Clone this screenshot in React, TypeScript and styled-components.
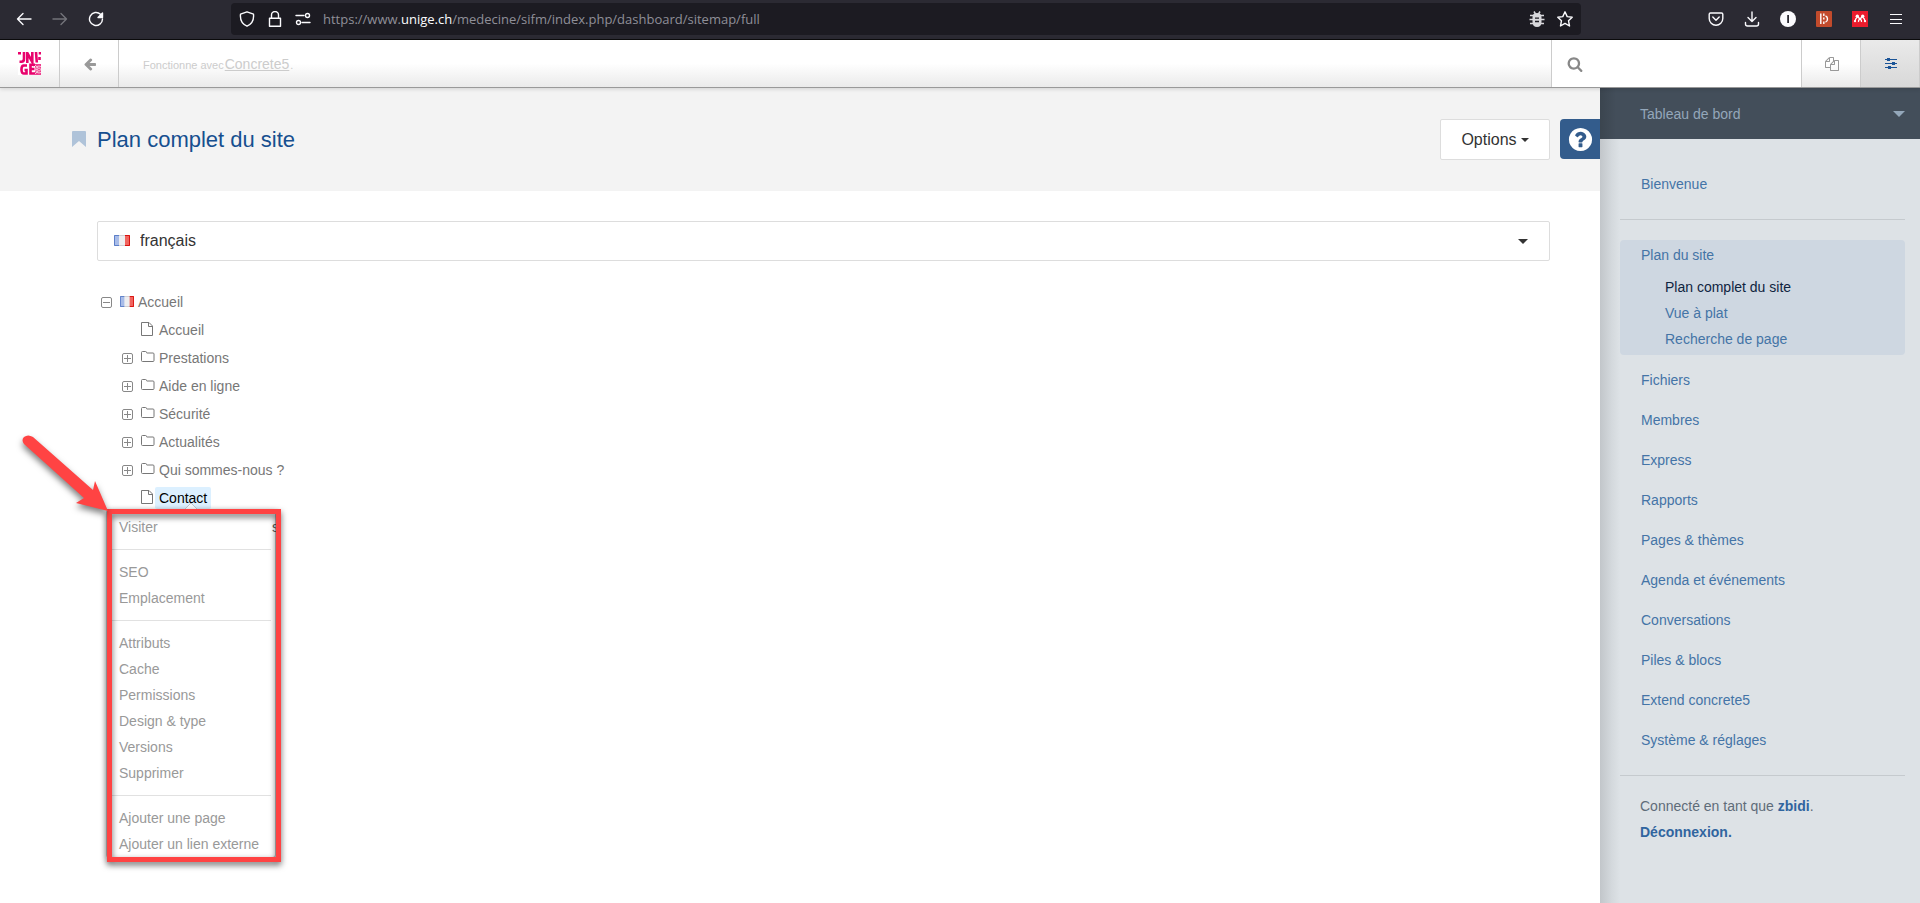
import React from "react";
import styled, { createGlobalStyle, css } from "styled-components";

const GlobalStyle = createGlobalStyle`
  * { box-sizing: border-box; }
  body {
    margin: 0;
    background: #fff;
    font-family: "Liberation Sans", Arial, sans-serif;
    font-size: 14px;
    line-height: 20px;
  }
  a { text-decoration: none; color: inherit; }
  svg { display: block; flex: none; }
  button { font: inherit; color: inherit; border: 0; background: none; padding: 0; }
`;

const Page = styled.div`
  min-height: 100vh;
  display: flex;
  flex-direction: column;
`;

/* Browser bar */

const BrowserBar = styled.div`
  display: flex;
  align-items: center;
  height: 40px;
  padding-bottom: 1px;
  background: #2b2a33;
  border-bottom: 1px solid #0c0c0d;
  color: #fbfbfe;
`;

const NavButtons = styled.div`
  display: flex;
  align-items: center;
  gap: 20px;
  width: 231px;
  padding-left: 16px;
`;

const IconButton = styled.button<{ $dim?: boolean }>`
  display: flex;
  color: ${(p) => (p.$dim ? "#73737a" : "inherit")};
`;

const AddressField = styled.div`
  flex: 1;
  display: flex;
  align-items: center;
  gap: 12px;
  height: 32px;
  padding: 0 8px;
  background: #1c1b22;
  border-radius: 4px;
`;

const Url = styled.div`
  flex: 1;
  font-family: "Open Sans", "Noto Sans", sans-serif;
  font-size: 13px;
  color: #8f8f98;
  strong { font-weight: 400; color: #fbfbfe; }
`;

const Extensions = styled.div`
  display: flex;
  align-items: center;
  justify-content: flex-end;
  gap: 20px;
  width: 339px;
  padding-right: 16px;
`;

/* CMS toolbar */

const Toolbar = styled.header`
  position: relative;
  z-index: 2;
  display: flex;
  height: 48px;
  background: linear-gradient(to bottom, #fff 50%, #eaeaea);
  border-bottom: 1px solid #999;
  box-shadow: 0 1px 4px rgba(0, 0, 0, 0.15);
`;

const ToolCell = styled.a<{ $active?: boolean }>`
  display: flex;
  align-items: center;
  justify-content: center;
  width: 59px;
  padding-left: 2px;
  border-right: 1px solid #ccc;
  color: #999;
  ${(p) =>
    p.$active &&
    css`
      background: linear-gradient(to bottom, #eaeaea, #d8d8d8);
      color: #1b5497;
    `}
`;

const LogoCell = styled(ToolCell)`
  width: 60px;
  padding-left: 0;
`;

const Powered = styled.div`
  flex: 1;
  display: flex;
  align-items: baseline;
  gap: 1px;
  padding: 14px 24px 0;
  font-size: 11px;
  color: #ccc;
  a { font-size: 14px; text-decoration: underline; }
`;

const SearchBox = styled.label`
  display: flex;
  align-items: center;
  gap: 12px;
  width: 251px;
  padding: 0 15px;
  background: #fff;
  border: solid #ccc;
  border-width: 0 1px;
  color: #888;
  input {
    flex: 1;
    min-width: 0;
    border: 0;
    outline: 0;
    background: none;
    font: inherit;
  }
`;

/* Page body */

const Body = styled.div`
  flex: 1;
  display: flex;
`;

const Main = styled.main`
  flex: 1;
  min-width: 0;
`;

const PageHeader = styled.div`
  display: flex;
  align-items: flex-start;
  padding: 31px 0 31px 72px;
  background: #f3f3f3;
`;

const Bookmark = styled.svg`
  margin-top: 12px;
`;

const Title = styled.h1`
  flex: 1;
  margin: 0 0 0 11px;
  font-size: 22px;
  line-height: 41px;
  font-weight: 400;
  color: #164f8f;
`;

const OptionsButton = styled.button`
  display: flex;
  align-items: center;
  justify-content: center;
  gap: 4px;
  width: 110px;
  height: 41px;
  margin-right: 10px;
  border: 1px solid #ddd;
  border-radius: 2px;
  background: #fff;
  font-size: 16px;
  color: #333;
`;

const HelpButton = styled.button`
  display: flex;
  align-items: center;
  justify-content: center;
  width: 40px;
  height: 40px;
  border-radius: 4px 0 0 4px;
  background: #335c8c;
  color: #fff;
`;

const Content = styled.div`
  padding: 30px 50px 24px 97px;
`;

const LanguagePicker = styled.label`
  display: flex;
  align-items: center;
  gap: 10px;
  height: 40px;
  padding: 0 21px 0 16px;
  border: 1px solid #ddd;
  border-radius: 2px;
  color: #333;
  select {
    flex: 1;
    appearance: none;
    border: 0;
    outline: 0;
    padding: 0;
    background: none;
    font: inherit;
    font-size: 16px;
    color: inherit;
  }
`;

/* Site tree */

const Tree = styled.ul`
  margin: 27px 0 0;
  padding: 0;
  list-style: none;
  ul { margin: 0; padding: 0 0 0 21px; list-style: none; }
`;

const Row = styled.div`
  position: relative;
  display: flex;
  align-items: center;
  height: 28px;
  padding-left: 4px;
  color: #777;
`;

const Toggle = styled.button`
  width: 11px;
  height: 12px;
  margin-right: 8px;
  color: #888;
`;

const ToggleSpace = styled.span`
  width: 11px;
  margin-right: 8px;
`;

const NodeLink = styled.a<{ $selected?: boolean }>`
  padding: 1px 4px;
  border-radius: 2px;
  background: ${(p) => (p.$selected ? "#dcf0ff" : "none")};
  color: ${(p) => (p.$selected ? "#000" : "inherit")};
`;

/* Context menu, opened below the selected page */

const MenuLayer = styled.div`
  position: absolute;
  z-index: 3;
  top: 25px;
  left: -12px;
  width: 170px;
`;

const Menu = styled.ul`
  && {
    padding: 4px 4px 0 5px;
    border: 1px solid #bbb;
    border-radius: 3px;
    background: #fff;
    box-shadow: 0 2px 6px rgba(0, 0, 0, 0.2);
    color: #999;
  }
`;

const MenuItem = styled.li`
  display: flex;
  justify-content: space-between;
  padding-left: 7px;
  line-height: 26px;
  white-space: nowrap;
  span { margin-right: -8px; color: #555; }
`;

const MenuDivider = styled.li`
  height: 1px;
  margin: 9px 0;
  background: #e1e1e1;
`;

const Notch = styled.svg`
  position: absolute;
  top: -7px;
  left: 76px;
`;

const Frame = styled.div`
  position: absolute;
  inset: 0 -5px -4px 1px;
  border: 5px solid #ff4343;
  filter: drop-shadow(0 3px 3px rgba(0, 0, 0, 0.6));
  pointer-events: none;
`;

const Pointer = styled.svg`
  position: absolute;
  top: -79px;
  left: -90px;
  overflow: visible;
  filter: drop-shadow(0 4px 3px rgba(0, 0, 0, 0.5));
  pointer-events: none;
`;

/* Dashboard panel */

const Panel = styled.aside`
  width: 320px;
  background: linear-gradient(to right, #c2c6ca, #d4d9dd 12px, #dde2e6 20px);
`;

const PanelHeader = styled.button`
  display: flex;
  align-items: center;
  justify-content: space-between;
  width: 100%;
  height: 51px;
  padding: 0 15px 0 40px;
  background: linear-gradient(to right, #3b454f, #434e5a 16px);
  color: #94a7ba;
`;

const PanelNav = styled.nav`
  padding: 25px 15px 0 20px;
  color: #4474a6;
`;

const PanelLink = styled.a`
  display: block;
  padding: 10px 0 10px 21px;
`;

const PanelGroup = styled.div`
  margin-bottom: 5px;
  padding-bottom: 3px;
  border-radius: 4px;
  background: #ced7e1;
`;

const GroupTitle = styled.a`
  display: block;
  padding: 5px 21px;
  margin-bottom: 4px;
`;

const SubLink = styled.a<{ $current?: boolean }>`
  display: block;
  padding-left: 45px;
  line-height: 26px;
  color: ${(p) => (p.$current ? "#0f2440" : "inherit")};
`;

const Divider = styled.hr`
  height: 1px;
  margin: 15px 0 20px;
  border: 0;
  background: #c5cace;
`;

const Account = styled.p`
  margin: -3px 0 0;
  padding-left: 20px;
  line-height: 26px;
  color: #5f6c79;
  a { font-weight: 700; color: #30659f; }
`;

/* Icons */

const Caret = ({ w, h }: { w: number; h: number }) => (
  <svg width={w} height={h} viewBox="0 0 10 5" preserveAspectRatio="none" fill="currentColor">
    <path d="M0 0h10L5 5z" />
  </svg>
);

const Fa = ({ d, size }: { d: string; size: number }) => (
  <svg width={size} height={size} viewBox="0 0 1792 1792" fill="currentColor">
    <path d={d} />
  </svg>
);

const ARROW_LEFT =
  "M1664 896v128q0 53-32.5 90.5t-84.5 37.5h-704l293 294q38 36 38 90t-38 90l-75 76q-37 37-90 37-52 0-91-37l-651-652q-37-37-37-90 0-52 37-91l651-650q38-38 91-38 52 0 90 38l75 74q38 38 38 91t-38 91l-293 293h704q52 0 84.5 37.5t32.5 90.5z";
const SEARCH =
  "M1216 832q0-185-131.5-316.5t-316.5-131.5-316.5 131.5-131.5 316.5 131.5 316.5 316.5 131.5 316.5-131.5 131.5-316.5zm512 832q0 52-38 90t-90 38q-54 0-90-38l-343-342q-179 124-399 124-143 0-273.5-55.5t-225-150-150-225-55.5-273.5 55.5-273.5 150-225 225-150 273.5-55.5 273.5 55.5 225 150 150 225 55.5 273.5q0 220-124 399l343 343q37 37 37 90z";
const FILES =
  "M1696 384q40 0 68 28t28 68v1216q0 40-28 68t-68 28h-960q-40 0-68-28t-28-68v-288h-544q-40 0-68-28t-28-68v-672q0-40 20-88t48-76l408-408q28-28 76-48t88-20h416q40 0 68 28t28 68v328q68-40 128-40h416zm-544 213l-299 299h299v-299zm-640-384l-299 299h299v-299zm196 647l316-316v-416h-384v416q0 40-28 68t-68 28h-416v640h512v-256q0-40 20-88t48-76zm956 804v-1152h-384v416q0 40-28 68t-68 28h-416v640h896z";
const QUESTION =
  "M1024 1376v-192q0-14-9-23t-23-9h-192q-14 0-23 9t-9 23v192q0 14 9 23t23 9h192q14 0 23-9t9-23zm256-672q0-88-55.5-163t-138.5-116-170-41q-243 0-371 213-15 24 8 42l132 100q7 6 19 6 16 0 25-12 53-68 86-92 34-24 86-24 48 0 85.5 26t37.5 59q0 38-20 61t-68 45q-63 28-115.5 86.5t-52.5 125.5v36q0 14 9 23t23 9h192q14 0 23-9t9-23q0-19 21.5-49.5t54.5-49.5q32-18 49-28.5t46-35 44.5-48 28-60.5 12.5-81zm384 192q0 209-103 385.5t-279.5 279.5-385.5 103-385.5-103-279.5-279.5-103-385.5 103-385.5 279.5-279.5 385.5-103 385.5 103 279.5 279.5 103 385.5z";

const Line = ({ children, size = 16 }: { children: React.ReactNode; size?: number }) => (
  <svg
    width={size}
    height={size}
    viewBox="0 0 16 16"
    fill="none"
    stroke="currentColor"
    strokeWidth="1.4"
    strokeLinecap="round"
    strokeLinejoin="round"
  >
    {children}
  </svg>
);

const Flag = ({ w }: { w: number }) => (
  <svg width={w} height="12" viewBox="0 0 16 12" preserveAspectRatio="none">
    <rect width="16" height="11" fill="#eeeef0" />
    <rect width="5" height="11" fill="#a8bce8" />
    <rect x="11" width="5" height="11" fill="#f0655f" />
    <path d="M5.500.5H.5v10h5" fill="none" stroke="#5d7fc8" />
    <path d="M10.500.5h5v10h-5" fill="none" stroke="#d9120f" />
    <path d="M5 .5h6M5 10.500h6" stroke="#cfcfd2" />
  </svg>
);

const ToggleIcon = ({ open }: { open?: boolean }) => (
  <svg width="11" height="11" viewBox="0 0 11 11" fill="none" stroke="currentColor">
    <rect x=".5" y=".5" width="10" height="10" rx="1.500" />
    <path d={open ? "M2 5.500h7" : "M2 5.500h7M5.500 2v7"} />
  </svg>
);

const FileIcon = () => (
  <svg width="14" height="16" viewBox="0 0 14 16" fill="none" stroke="#777">
    <path d="M.5.5h7.500l3.500 3.500v9.500H.5zM7.500.5v4h4" />
  </svg>
);

const FolderIcon = () => (
  <svg width="14" height="14" viewBox="0 0 14 14" fill="none" stroke="#777">
    <path d="M1.500.5h3q1 0 1 1 0 .5.5.5h6q1 0 1 1v6.500q0 1-1 1H1.500q-1 0-1-1v-8q0-1 1-1z" />
  </svg>
);

const Logo = () => (
  <svg width="23" height="23" viewBox="0 0 23 23">
    <rect width="23" height="23" fill="#fff" />
    <g fill="none" stroke="#e8026c" strokeWidth="2.600">
      <path d="M0 1.300h3M1.500 9.800h2q2.500 0 2.500-3V0" />
      <path d="M9.300 11V1l5 9V0M18 0l.8 10.500M22 0v2.500M21.500 5v3" />
      <path d="M9 13.500H5.500Q3.300 14 3.500 18t3 3.500h2V18H6.500" />
      <path d="M17 12.800h-4.500V21.500H17M12.500 17h4" />
    </g>
    <path d="M17 12h6v11h-6z" fill="#ee3f8f" />
    <g fill="none" stroke="#fbc4da" strokeWidth=".9">
      <circle cx="21" cy="17.500" r="1.500" />
      <circle cx="21" cy="17.500" r="3.500" />
      <path d="M17 13l3 3M17 22l3-3M18 17.500h1.500" />
    </g>
  </svg>
);

type TreeItem = { label: string; folder: boolean };

const TREE: TreeItem[] = [
  { label: "Accueil", folder: false },
  { label: "Prestations", folder: true },
  { label: "Aide en ligne", folder: true },
  { label: "Sécurité", folder: true },
  { label: "Actualités", folder: true },
  { label: "Qui sommes-nous ?", folder: true },
  { label: "Contact", folder: false },
];

const MENU: string[][] = [
  ["Visiter"],
  ["SEO", "Emplacement"],
  ["Attributs", "Cache", "Permissions", "Design & type", "Versions", "Supprimer"],
  ["Ajouter une page", "Ajouter un lien externe"],
];

const SECTIONS = [
  "Fichiers",
  "Membres",
  "Express",
  "Rapports",
  "Pages & thèmes",
  "Agenda et événements",
  "Conversations",
  "Piles & blocs",
  "Extend concrete5",
  "Système & réglages",
];

const ContextMenu = () => (
  <MenuLayer>
    <Menu>
      {MENU.map((group, g) => (
        <React.Fragment key={g}>
          {g > 0 && <MenuDivider role="separator" />}
          {group.map((label) => (
            <MenuItem key={label}>
              <a href="#">{label}</a>
              {g === 0 && <span aria-hidden="true">s</span>}
            </MenuItem>
          ))}
        </React.Fragment>
      ))}
    </Menu>
    <Notch width="18" height="9" viewBox="0 0 18 9">
      <path d="M1 9l8-8 8 8" fill="#f4f9fd" stroke="#bcc6ce" />
    </Notch>
    <Frame />
    <Pointer width="92" height="82" viewBox="0 0 92 82">
      <path
        d="M8 14Q5 10 8 7Q12 4 17 7L77 60L79 51L92 81L60 73L68 68Z"
        fill="#ff4343"
      />
    </Pointer>
  </MenuLayer>
);

const TreeNode = ({ item }: { item: TreeItem }) => {
  const selected = item.label === "Contact";
  return (
    <li>
      <Row>
        {item.folder ? (
          <Toggle aria-label={`Déplier ${item.label}`}>
            <ToggleIcon />
          </Toggle>
        ) : (
          <ToggleSpace />
        )}
        {item.folder ? <FolderIcon /> : <FileIcon />}
        <NodeLink href="#" $selected={selected}>
          {item.label}
        </NodeLink>
        {selected && <ContextMenu />}
      </Row>
    </li>
  );
};

export default function App() {
  return (
    <Page>
      <GlobalStyle />
      <BrowserBar>
        <NavButtons>
          <IconButton aria-label="Précédent">
            <Line><path d="M15 8H1.500M7 2.500L1.500 8L7 13.500" /></Line>
          </IconButton>
          <IconButton $dim aria-label="Suivant">
            <Line><path d="M1 8h13.500M9 2.500L14.500 8L9 13.500" /></Line>
          </IconButton>
          <IconButton aria-label="Actualiser">
            <Line>
              <path d="M14.500 8A6.500 6.500 0 1 1 12.500 3.300" />
              <path d="M14.500 2v4.500H10z" fill="currentColor" />
            </Line>
          </IconButton>
        </NavButtons>
        <AddressField>
          <Line>
            <path d="M8 .8L14.500 3.200C15 8 13 13 8 15.200C3 13 1 8 1.500 3.200Z" />
          </Line>
          <Line>
            <path d="M2.500 7.200h11v8h-11zM4.500 7V4a3.500 3.500 0 0 1 7 0v3" />
          </Line>
          <Line>
            <path d="M1 4.500h8M7 11.500h8" />
            <circle cx="12.500" cy="4.500" r="2" />
            <circle cx="3.500" cy="11.500" r="2" />
          </Line>
          <Url>
            https://www.<strong>unige.ch</strong>/medecine/sifm/index.php/dashboard/sitemap/full
          </Url>
          <IconButton aria-label="Signaler un problème">
            <svg width="16" height="16" viewBox="0 0 16 16">
              <g fill="none" stroke="#d7d7db" strokeWidth="1.500">
                <path d="M5 .5l1.500 2.500M11 .5L9.500 3M1 4.500h14M.5 8.500h15M1 12.500h14" />
              </g>
              <path d="M3.500 6Q3.500 2 8 2t4.500 4v5q0 5-4.500 5t-4.500-5z" fill="#d7d7db" />
              <path d="M6 7.200h4M6 10.500h4" stroke="#1c1b22" strokeWidth="1.300" />
            </svg>
          </IconButton>
          <IconButton aria-label="Ajouter aux favoris">
            <Line>
              <path d="M8 .8l2.200 4.800 5 .6-3.700 3.500 1 5.300L8 12.400 3.500 15l1-5.300L.8 6.200l5-.6z" />
            </Line>
          </IconButton>
        </AddressField>
        <Extensions>
          <IconButton aria-label="Pocket">
            <Line>
              <path d="M2.500 2h11q1.300 0 1.300 1.300V7.500a6.800 6.800 0 0 1-13.600 0V3.300Q1.200 2 2.500 2zM4.800 6L8 9.200 11.200 6" />
            </Line>
          </IconButton>
          <IconButton aria-label="Téléchargements">
            <Line><path d="M8 1v9.500M4 6.500l4 4 4-4M1.500 11.500v1.500q0 2 2 2h9q2 0 2-2v-1.500" /></Line>
          </IconButton>
          <IconButton aria-label="Compte">
            <svg width="16" height="16" viewBox="0 0 16 16">
              <circle cx="8" cy="8" r="8" fill="#fbfbfe" />
              <rect x="7.200" y="4" width="1.800" height="8" fill="#2b2a33" />
            </svg>
          </IconButton>
          <IconButton aria-label="Extension B">
            <svg width="16" height="16" viewBox="0 0 16 16">
              <rect width="16" height="16" rx="1" fill="#c24b2c" />
              <path
                d="M4.800 2.500v10.500M7.800 2.500v2.500M7.800 6.500v2M7.800 10.500v2.500M9.500 5q2 .5 2 3t-2 3.200"
                fill="none"
                stroke="#fff"
                strokeWidth="1.400"
              />
            </svg>
          </IconButton>
          <IconButton aria-label="Mendeley">
            <svg width="16" height="16" viewBox="0 0 16 16">
              <rect width="16" height="16" fill="#eb1c2d" />
              <g fill="#fff">
                <circle cx="5.300" cy="5.200" r="1.700" />
                <circle cx="10.700" cy="5.200" r="1.700" />
                <circle cx="3" cy="10.200" r="1.100" />
                <circle cx="8" cy="8" r="1.300" />
                <circle cx="13" cy="10.200" r="1.100" />
              </g>
              <path
                d="M3 10.200Q3.500 7.500 5 6.500M6 6l2 2 2-2M6.500 11q-.5-2 1.500-3 2 1 1.500 3M13 10.200Q12.500 7.500 11 6.500"
                fill="none"
                stroke="#fff"
                strokeWidth="1.300"
              />
            </svg>
          </IconButton>
          <IconButton aria-label="Menu">
            <svg width="16" height="16" viewBox="0 0 16 16" stroke="#fbfbfe">
              <path d="M2 3.500h12M2 8.500h12M2 12.500h12" />
            </svg>
          </IconButton>
        </Extensions>
      </BrowserBar>

      <Toolbar>
        <LogoCell href="#" aria-label="UNIGE"><Logo /></LogoCell>
        <ToolCell href="#" aria-label="Retour"><Fa d={ARROW_LEFT} size={14} /></ToolCell>
        <Powered>
          Fonctionne avec <a href="#">Concrete5</a><span>.</span>
        </Powered>
        <SearchBox>
          <Fa d={SEARCH} size={16} />
          <input type="search" aria-label="Recherche" />
        </SearchBox>
        <ToolCell href="#" aria-label="Pages"><Fa d={FILES} size={14} /></ToolCell>
        <ToolCell href="#" $active aria-label="Tableau de bord">
          <svg width="12" height="12" viewBox="0 0 12 12" fill="currentColor">
            <path d="M0 1h12v1H0zM0 5h12v1H0zM0 9h12v1H0zM2 0h3v3H2zM7 4h3v3H7zM3 8h3v3H3z" />
          </svg>
        </ToolCell>
      </Toolbar>

      <Body>
        <Main>
          <PageHeader>
            <Bookmark width="14" height="16" viewBox="0 0 14 16" fill="#afc3d9">
              <path d="M1 0h12q1 0 1 1v15l-7-6-7 6V1q0-1 1-1z" />
            </Bookmark>
            <Title>Plan complet du site</Title>
            <OptionsButton>Options <Caret w={8} h={4} /></OptionsButton>
            <HelpButton aria-label="Aide"><Fa d={QUESTION} size={27} /></HelpButton>
          </PageHeader>
          <Content>
            <LanguagePicker>
              <Flag w={16} />
              <select aria-label="Langue" defaultValue="fr">
                <option value="fr">français</option>
              </select>
              <Caret w={10} h={5} />
            </LanguagePicker>
            <Tree>
              <li>
                <Row>
                  <Toggle aria-label="Replier Accueil"><ToggleIcon open /></Toggle>
                  <Flag w={14} />
                  <NodeLink href="#">Accueil</NodeLink>
                </Row>
                <ul>
                  {TREE.map((item) => (
                    <TreeNode key={item.label} item={item} />
                  ))}
                </ul>
              </li>
            </Tree>
          </Content>
        </Main>

        <Panel>
          <PanelHeader>Tableau de bord <Caret w={12} h={6} /></PanelHeader>
          <PanelNav>
            <PanelLink href="#">Bienvenue</PanelLink>
            <Divider />
            <PanelGroup>
              <GroupTitle href="#">Plan du site</GroupTitle>
              <SubLink href="#" $current>Plan complet du site</SubLink>
              <SubLink href="#">Vue à plat</SubLink>
              <SubLink href="#">Recherche de page</SubLink>
            </PanelGroup>
            {SECTIONS.map((label) => (
              <PanelLink key={label} href="#">{label}</PanelLink>
            ))}
            <Divider />
            <Account>
              Connecté en tant que <a href="#">zbidi</a>.
              <br />
              <a href="#">Déconnexion.</a>
            </Account>
          </PanelNav>
        </Panel>
      </Body>
    </Page>
  );
}
